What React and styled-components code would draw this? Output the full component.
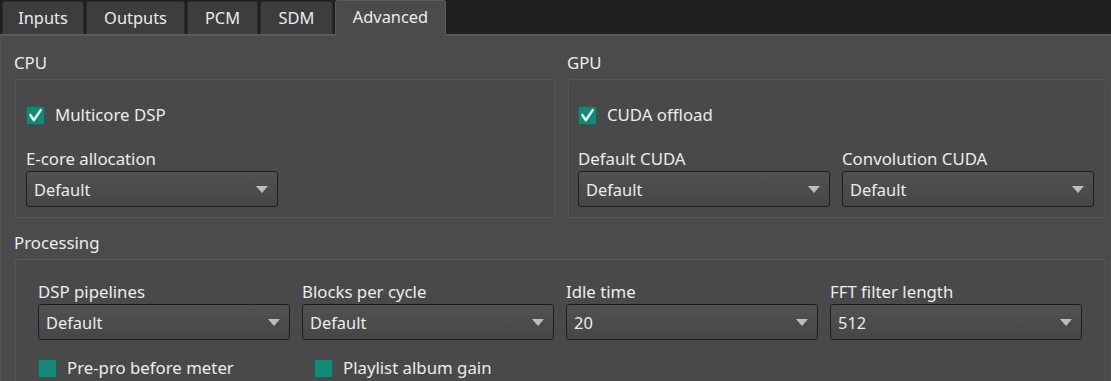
import React from "react";
import styled, { createGlobalStyle } from "styled-components";

const Global = createGlobalStyle`
  html, body { margin: 0; padding: 0; background: #4b4b4b; }
  body {
    font-family: "Noto Sans", "Open Sans", "Liberation Sans", sans-serif;
    font-size: 16px;
    color: #ececec;
    overflow: hidden;
  }
  * { box-sizing: border-box; }
`;

const Root = styled.div`
  width: 1111px;
  height: 381px;
  overflow: hidden;
  background: #4b4b4b;
`;

const TabBar = styled.div`
  display: flex;
  align-items: flex-end;
  gap: 2px;
  height: 34px;
  padding-left: 2px;
  background: #1f1f1f;
`;

const Tab = styled.div`
  position: relative;
  z-index: 1;
  width: ${(p) => p.$w}px;
  height: ${(p) => (p.$active ? 36 : 33)}px;
  margin-bottom: ${(p) => (p.$active ? -2 : 0)}px;
  display: flex;
  align-items: center;
  justify-content: center;
  padding-bottom: ${(p) => (p.$active ? 3 : 0)}px;
  background: ${(p) => (p.$active ? "#4b4b4b" : "#3d3d3d")};
  border: 1px solid ${(p) => (p.$active ? "#5c5c5c" : "#2c2c2c")};
  border-bottom: none;
  border-radius: 3px 3px 0 0;
  color: #ececec;
  font-size: 16.4px;
  line-height: 20px;
`;

const Panel = styled.div`
  border-top: 2px solid #5a5a5a;
  border-left: 1px solid #555;
  padding: 17px 0 0 14px;
  display: flex;
  flex-direction: column;
  gap: 15px;
`;

const TopRow = styled.div`
  display: grid;
  grid-template-columns: 540px 538px;
  gap: 13px;
`;

const Group = styled.div`
  display: flex;
  flex-direction: column;
  gap: 6px;
`;

const GroupTitle = styled.div`
  height: 20px;
  line-height: 20px;
  font-size: 16.8px;
  color: #ececec;
  margin-left: -1px;
`;

const Frame = styled.div`
  border: 1px solid #555555;
  border-radius: 2px;
  background: #494949;
  padding: ${(p) => p.$pad};
  display: flex;
  flex-direction: column;
  width: ${(p) => (p.$w ? `${p.$w}px` : "auto")};
  height: ${(p) => (p.$h ? `${p.$h}px` : "auto")};
`;

const CheckRow = styled.div`
  display: flex;
  align-items: center;
  margin-top: ${(p) => p.$mt ?? 0}px;
`;

const CheckItem = styled.label`
  display: inline-flex;
  align-items: center;
  gap: 10px;
  height: 20px;
  width: ${(p) => (p.$w ? `${p.$w}px` : "auto")};
  font-size: 16.8px;
  line-height: 20px;
  color: #ececec;
`;

const Box = styled.span`
  width: 19px;
  height: 19px;
  background: #138a77;
  border: 1px solid #2b5a53;
  display: inline-flex;
  align-items: center;
  justify-content: center;
  flex: none;
`;

const FieldGrid = styled.div`
  display: grid;
  grid-template-columns: repeat(${(p) => p.$cols}, 252px);
  column-gap: 12px;
  margin-top: ${(p) => p.$mt ?? 0}px;
`;

const Field = styled.div`
  display: flex;
  flex-direction: column;
  gap: 2px;
`;

const FieldLabel = styled.div`
  height: 20px;
  line-height: 20px;
  font-size: 16.8px;
  color: #ececec;
`;

const Select = styled.div`
  height: 36px;
  border: 1px solid #1e1e1e;
  border-radius: 3px;
  background: linear-gradient(#525252, #464646);
  display: flex;
  align-items: center;
  justify-content: space-between;
  padding: 0 9px 0 7px;
  font-size: 16.4px;
  color: #ececec;
`;

const Arrow = styled.span`
  width: 0;
  height: 0;
  border-left: 6px solid transparent;
  border-right: 6px solid transparent;
  border-top: 7px solid #bdbdbd;
  margin-top: 1px;
`;

const Check = ({ checked, children, w }) => (
  <CheckItem $w={w}>
    <Box>
      {checked && (
        <svg width="15" height="15" viewBox="0 0 16 16">
          <path d="M2.5 7.5 L6.3 13 L13.5 2.2" fill="none" stroke="#e6f3ef" strokeWidth="2.6" strokeLinecap="round" strokeLinejoin="round" />
        </svg>
      )}
    </Box>
    {children}
  </CheckItem>
);

const Dropdown = ({ label, value }) => (
  <Field>
    <FieldLabel>{label}</FieldLabel>
    <Select>
      <span>{value}</span>
      <Arrow />
    </Select>
  </Field>
);

const tabs = [
  { t: "Inputs", w: 82 },
  { t: "Outputs", w: 99 },
  { t: "PCM", w: 71 },
  { t: "SDM", w: 73 },
  { t: "Advanced", w: 111, active: true },
];

export default function App() {
  return (
    <Root>
      <Global />
      <TabBar>
        {tabs.map((t) => (
          <Tab key={t.t} $w={t.w} $active={t.active}>
            {t.t}
          </Tab>
        ))}
      </TabBar>
      <Panel>
        <TopRow>
          <Group>
            <GroupTitle>CPU</GroupTitle>
            <Frame $pad="25px 10px 10px 10px" $h={139}>
              <CheckRow>
                <Check checked>Multicore DSP</Check>
              </CheckRow>
              <FieldGrid $cols={1} $mt={24}>
                <Dropdown label="E-core allocation" value="Default" />
              </FieldGrid>
            </Frame>
          </Group>
          <Group>
            <GroupTitle>GPU</GroupTitle>
            <Frame $pad="25px 9px 10px 9px" $h={139}>
              <CheckRow>
                <Check checked>CUDA offload</Check>
              </CheckRow>
              <FieldGrid $cols={2} $mt={24}>
                <Dropdown label="Default CUDA" value="Default" />
                <Dropdown label="Convolution CUDA" value="Default" />
              </FieldGrid>
            </Frame>
          </Group>
        </TopRow>
        <Group>
          <GroupTitle>Processing</GroupTitle>
          <Frame $pad="22px 22px 10px 22px" $w={1091} $h={140}>
            <FieldGrid $cols={4}>
              <Dropdown label="DSP pipelines" value="Default" />
              <Dropdown label="Blocks per cycle" value="Default" />
              <Dropdown label="Idle time" value="20" />
              <Dropdown label="FFT filter length" value="512" />
            </FieldGrid>
            <CheckRow $mt={18}>
              <Check w={276}>Pre-pro before meter</Check>
              <Check>Playlist album gain</Check>
            </CheckRow>
          </Frame>
        </Group>
      </Panel>
    </Root>
  );
}
